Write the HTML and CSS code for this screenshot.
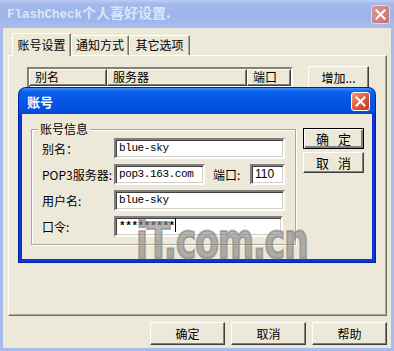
FILE: index.html
```html
<!DOCTYPE html>
<html lang="zh-CN">
<head>
  <meta charset="UTF-8" />
  <meta name="viewport" content="width=device-width, initial-scale=1.0" />
  <title>FlashCheck个人喜好设置.</title>
  <link rel="stylesheet" href="styles.css">
</head>
<body>
  <div class="window">
    <div class="titlebar">
      <span class="title"><span class="lat">FlashCheck</span>个人喜好设置.</span>
      <span class="close inactive">
        <svg width="11" height="11" viewBox="0 0 11 11"><path d="M1.5 1.5L9.5 9.5M9.5 1.5L1.5 9.5" stroke="#fff" stroke-width="2" stroke-linecap="square"/></svg>
      </span>
    </div>

    <div class="client">
      <div class="tabs">
        <div class="tab active">账号设置</div>
        <div class="tab">通知方式</div>
        <div class="tab">其它选项</div>
      </div>

      <div class="panel">
        <div class="listview">
          <div class="lv-head">
            <div class="col c1">别名</div>
            <div class="col c2">服务器</div>
            <div class="col c3">端口</div>
          </div>
        </div>
        <button class="btn add">增加...</button>
      </div>

      <div class="footer">
        <button class="btn big">确定</button>
        <button class="btn big">取消</button>
        <button class="btn big">帮助</button>
      </div>
    </div>

    <div class="dialog">
      <div class="dlg-title">
        <span class="dlg-name">账号</span>
        <span class="close active">
          <svg width="11" height="11" viewBox="0 0 11 11"><path d="M1.5 1.5L9.5 9.5M9.5 1.5L1.5 9.5" stroke="#fff" stroke-width="2" stroke-linecap="square"/></svg>
        </span>
      </div>
      <div class="dlg-body">
        <fieldset class="group">
          <legend>账号信息</legend>
          <div class="row">
            <span class="lbl">别名：</span>
            <div class="field wide">blue-sky</div>
          </div>
          <div class="row">
            <span class="lbl">POP3服务器:</span>
            <div class="field mid">pop3.163.com</div>
            <span class="lbl port-lbl">端口:</span>
            <div class="field port">110</div>
          </div>
          <div class="row">
            <span class="lbl">用户名:</span>
            <div class="field wide">blue-sky</div>
          </div>
          <div class="row">
            <span class="lbl">口令:</span>
            <div class="field pass">*********<span class="caret"></span></div>
          </div>
        </fieldset>
        <div class="dlg-buttons">
          <button class="btn small default">确 定</button>
          <button class="btn small">取 消</button>
        </div>
      </div>
    </div>

    <div class="watermark">iT.com.cn</div>
  </div>
</body>
</html>
```

FILE: styles.css
```css
* {
  box-sizing: border-box;
}

body {
  margin: 0;
  font-family: "Noto Sans CJK SC", "Liberation Sans", sans-serif;
  font-size: 12px;
  color: #000;
}

.window {
  position: relative;
  width: 394px;
  height: 351px;
  overflow: hidden;
  background: #ece9d8;
}

/* outer title bar (inactive) */
.titlebar {
  height: 28px;
  display: flex;
  align-items: center;
  justify-content: space-between;
  padding: 0 4px 0 7px;
  background: linear-gradient(#bccdf3 0, #a3b9eb 4px, #9db4ea 60%, #a9bded 100%);
}

.title {
  color: #dce6f8;
  font-size: 14px;
  font-weight: bold;
  line-height: 28px;
  margin-top: -2px;
}

.title .lat {
  font-family: "Liberation Mono", monospace;
  font-size: 12.5px;
}

.close {
  width: 19px;
  height: 19px;
  border: 1px solid #fff;
  border-radius: 3px;
  display: flex;
  align-items: center;
  justify-content: center;
}

.close.inactive {
  background: linear-gradient(135deg, #d79a98, #c4716f);
  border-color: #e8d4de;
  margin-top: 1px;
}

.close.active {
  background: linear-gradient(135deg, #f09a7c, #e0532f 55%, #c9391b);
}

.client {
  height: 323px;
  border: 3px solid #a9bbec;
  border-top: 0;
  padding: 5px 4px 0 5px;
}

/* tabs */
.tabs {
  display: flex;
  align-items: flex-end;
  height: 22px;
  padding-left: 4px;
}

.tab {
  height: 20px;
  line-height: 18px;
  border: 1px solid #fff;
  border-right-color: #716f64;
  border-bottom: 0;
  box-shadow: inset -1px 0 #aca899;
  text-align: center;
}

.tab:nth-child(2) { width: 58px; }
.tab:nth-child(3) { width: 61px; }

.tab.active {
  width: 59px;
  height: 23px;
  line-height: 21px;
  position: relative;
  z-index: 1;
  margin-bottom: -1px;
  background: #ece9d8;
}

.panel {
  height: 261px;
  border: 1px solid #fff;
  border-right-color: #716f64;
  border-bottom-color: #716f64;
  box-shadow: inset -1px -1px #aca899;
  padding: 11px 0 0 18px;
  display: flex;
  align-items: flex-start;
}

.listview {
  width: 266px;
  height: 170px;
  background: #fff;
  border: 2px solid;
  border-color: #808080 #fff #fff #808080;
  box-shadow: inset 1px 1px #404040;
}

.lv-head {
  display: flex;
  height: 17px;
}

.col {
  background: #ece9d8;
  border: 1px solid #fff;
  border-right-color: #404040;
  border-bottom-color: #404040;
  box-shadow: inset -1px -1px #808080;
  line-height: 14px;
  padding-left: 5px;
}

.c1 { width: 78px; }
.c2 { width: 140px; }
.c3 { width: 44px; }

.btn {
  font-family: inherit;
  font-size: 12px;
  background: #ece9d8;
  border: 1px solid;
  border-color: #fff #404040 #404040 #fff;
  box-shadow: inset -1px -1px #808080;
  padding: 0;
  color: #000;
}

.add {
  width: 61px;
  height: 23px;
  margin: -1px 0 0 15px;
}

.footer {
  display: flex;
  justify-content: flex-end;
  gap: 6px;
  margin-top: 6px;
}

.big {
  width: 75px;
  height: 23px;
}

/* account dialog */
.dialog {
  position: absolute;
  left: 19px;
  top: 88px;
  width: 356px;
  padding: 0 3px 3px;
  background: #0b37d6;
  border-radius: 7px 7px 0 0;
  box-shadow: 0 0 0 1px #0021a8;
}

.dlg-title {
  height: 26px;
  margin: 0 -3px;
  padding: 0 5px 0 8px;
  display: flex;
  align-items: center;
  justify-content: space-between;
  border-radius: 7px 7px 0 0;
  background: linear-gradient(#3d8ff9 0, #0b5fea 4px, #0556e6 50%, #0350de 85%, #0647c6 100%);
}

.dlg-name {
  color: #fff;
  font-size: 13px;
  font-weight: bold;
  margin-top: 1px;
}

.dlg-body {
  height: 145px;
  background: #ece9d8;
  display: flex;
  align-items: flex-start;
  padding-left: 9px;
}

.group {
  width: 265px;
  margin: 8px 0 0 0;
  padding: 2px 10px 7px 10px;
  border: 1px solid #aca899;
  box-shadow: inset 1px 1px #fff, 1px 1px #fff;
}

.group legend {
  padding: 0 2px;
  margin-left: -4px;
  line-height: 14px;
}

.row {
  display: flex;
  align-items: center;
  height: 21px;
  margin-bottom: 5px;
}

.row:last-child {
  margin-bottom: 0;
}

.lbl {
  width: 72px;
  flex: none;
}

.port-lbl {
  width: 37px;
  margin-left: 8px;
}

.field {
  flex: none;
  height: 21px;
  line-height: 17px;
  background: #fff;
  border: 2px solid;
  border-color: #808080 #fff #fff #808080;
  box-shadow: inset 1px 1px #404040, inset -1px -1px #d4d0c8;
  padding-left: 3px;
  font-family: "Liberation Mono", monospace;
  font-size: 11px;
  letter-spacing: -0.4px;
  white-space: nowrap;
}

.wide { width: 171px; }
.mid { width: 91px; }
.port { width: 35px; font-family: "Liberation Sans", sans-serif; font-size: 12px; letter-spacing: 0; }
.pass { width: 169px; font-weight: bold; }

.caret {
  display: inline-block;
  width: 1px;
  height: 14px;
  background: #000;
  vertical-align: -3px;
}

.dlg-buttons {
  display: flex;
  flex-direction: column;
  gap: 3px;
  margin: 14px 0 0 7px;
}

.small {
  width: 61px;
  height: 21px;
  font-size: 13px;
  letter-spacing: 3px;
  padding-left: 3px;
}

.default {
  border-color: #000;
  box-shadow: inset 1px 1px #fff, inset -2px -2px #808080;
}

.watermark {
  position: absolute;
  left: 136px;
  top: 212px;
  font-family: "DejaVu Sans", sans-serif;
  font-weight: bold;
  font-size: 50px;
  letter-spacing: -2px;
  color: rgba(130, 130, 130, 0.62);
  -webkit-text-stroke: 2px rgba(130, 130, 130, 0.62);
  transform: scaleX(0.7);
  transform-origin: left top;
  pointer-events: none;
}
```
